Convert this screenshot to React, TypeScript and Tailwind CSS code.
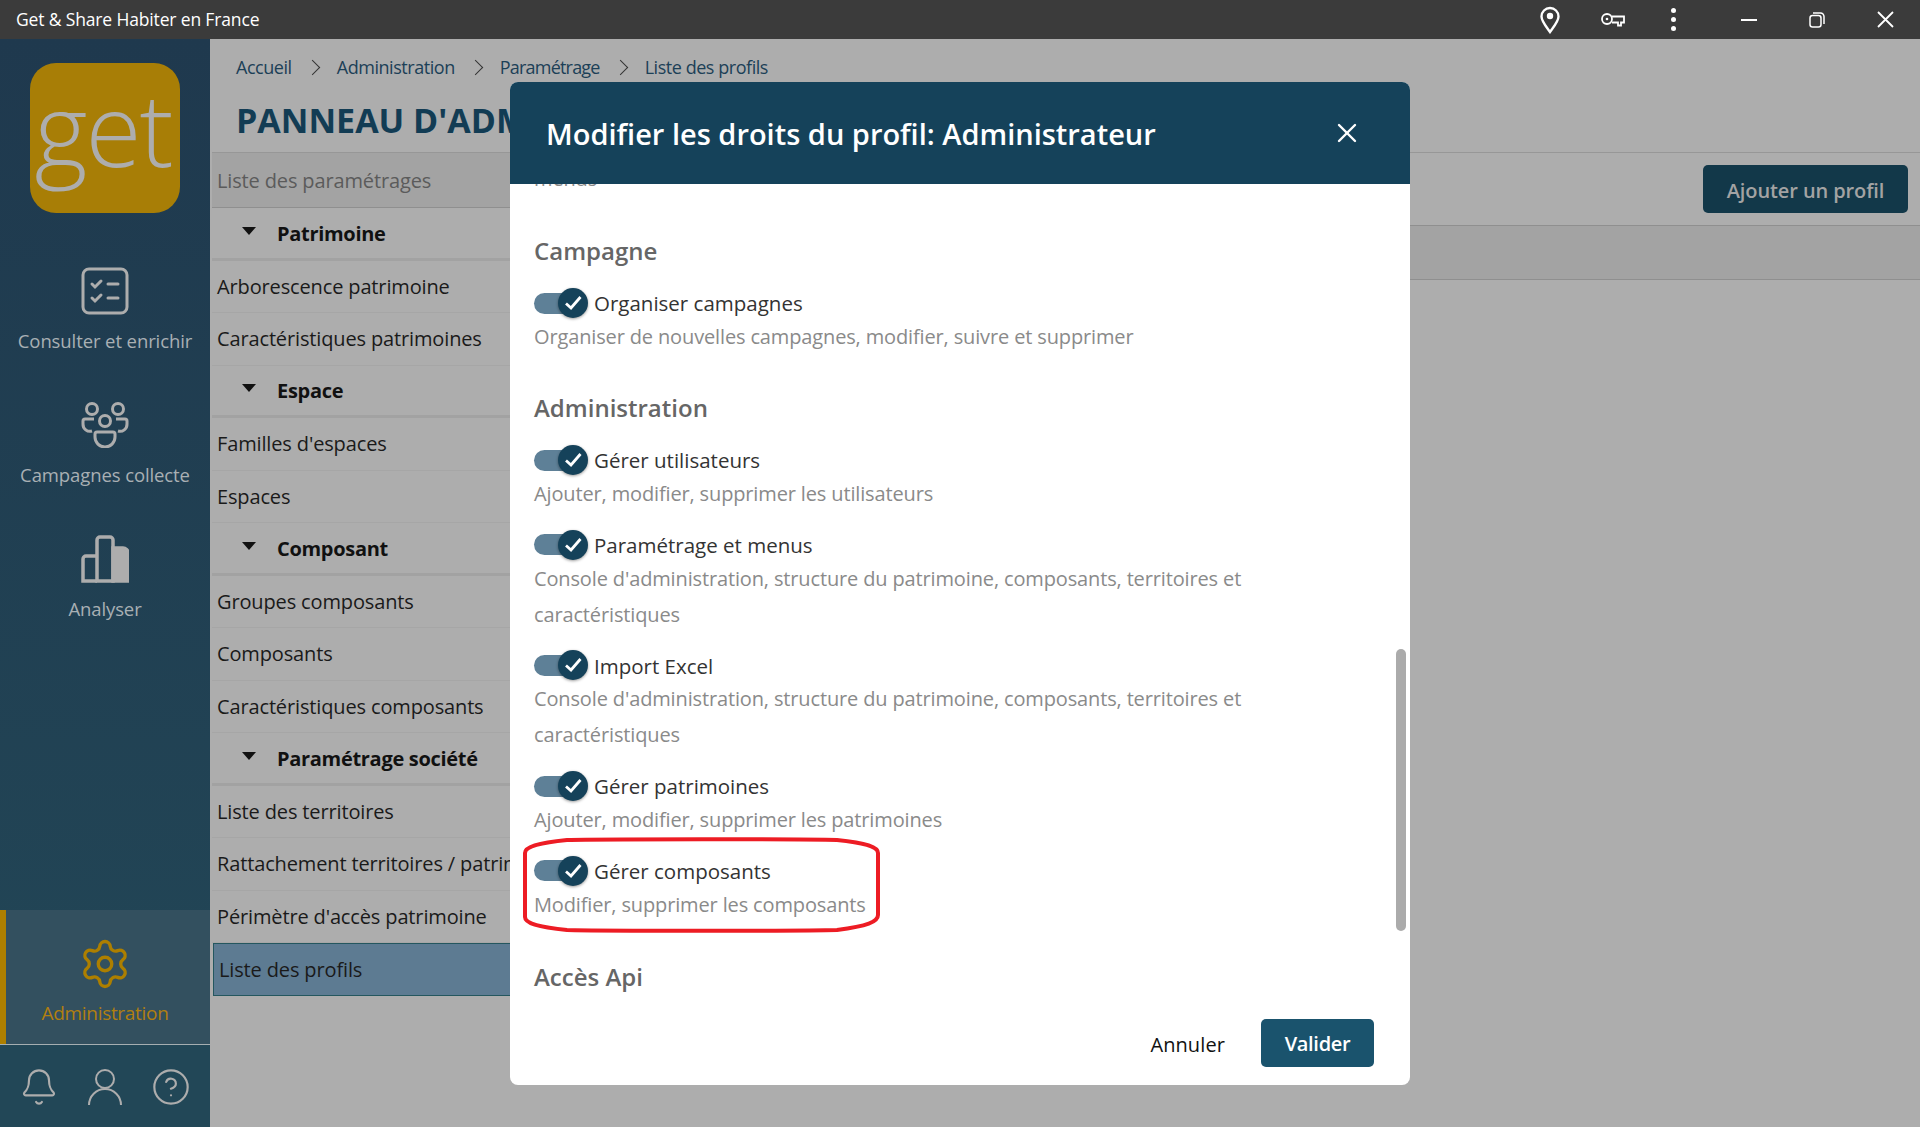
import { Bell, CircleHelp, Settings, X } from "lucide-react";

const listRows = [
  { label: "Patrimoine", section: true },
  { label: "Arborescence patrimoine" },
  { label: "Caractéristiques patrimoines" },
  { label: "Espace", section: true },
  { label: "Familles d'espaces" },
  { label: "Espaces" },
  { label: "Composant", section: true },
  { label: "Groupes composants" },
  { label: "Composants" },
  { label: "Caractéristiques composants" },
  { label: "Paramétrage société", section: true },
  { label: "Liste des territoires" },
  { label: "Rattachement territoires / patrimoine" },
  { label: "Périmètre d'accès patrimoine" },
  { label: "Liste des profils", active: true },
];

function NavItem({ icon, label }: { icon: React.ReactNode; label: string }) {
  return (
    <div className="flex flex-col items-center text-[#a9b0b4]">
      <div className="flex h-[48px] items-center justify-center">{icon}</div>
      <div className="mt-[13px] text-[18.5px] leading-[26px] tracking-[-0.1px]">{label}</div>
    </div>
  );
}

function Toggle({ label }: { label: string }) {
  return (
    <div className="flex h-[30px] items-center">
      <div className="flex h-[21px] w-[46px] items-center justify-end rounded-full bg-[#5e8097]">
        <div className="-mr-[8px] flex h-[30px] w-[30px] shrink-0 items-center justify-center rounded-full bg-[#15425a] shadow-[0_1px_3px_rgba(0,0,0,0.4)]">
          <svg width="22" height="22" viewBox="0 0 22 22" fill="none" stroke="#fff" strokeWidth="2.800">
            <path d="M4 11.500 9 16 18.500 5" />
          </svg>
        </div>
      </div>
      <span className="ml-[14px] pt-[1px] text-[20.5px] text-[#333]">{label}</span>
    </div>
  );
}

function Right({ label, desc }: { label: string; desc: string }) {
  return (
    <div>
      <Toggle label={label} />
      <p className="max-w-[720px] pt-[1px] text-[20px] leading-[36px] tracking-[-0.14px] text-[#8a8a8a]">{desc}</p>
    </div>
  );
}

function Heading({ children }: { children: React.ReactNode }) {
  return <h3 className="text-[24px] leading-[36px] font-semibold text-[#666]">{children}</h3>;
}

function Chevron() {
  return <span className="h-[11px] w-[11px] -translate-x-[2px] rotate-45 border-t-[1.500px] border-r-[1.500px] border-[#333]" />;
}

export default function App() {
  return (
    <div className="flex h-[1127px] w-[1920px] flex-col overflow-hidden bg-[#adadad] font-['Open_Sans',sans-serif]">
      {/* Title bar */}
      <div className="flex h-[39px] shrink-0 items-center bg-[#3b3b3b] pl-[16px] text-white">
        <span className="text-[17.5px] tracking-[-0.15px]">Get &amp; Share Habiter en France</span>
        <div className="ml-auto flex items-center">
          <svg width="22" height="28" viewBox="0 0 22 28" fill="none" stroke="#fff" strokeWidth="2.400" className="mr-[40px]">
            <path d="M11 26C6 19 2.500 15 2.500 10.500a8.500 8.500 0 0 1 17 0C19.500 15 16 19 11 26Z" />
            <circle cx="11" cy="10" r="3.200" fill="#fff" stroke="none" />
          </svg>
          <svg width="24" height="14" viewBox="0 0 24 14" fill="none" stroke="#fff" strokeWidth="1.800" className="mr-[46px]">
            <circle cx="6" cy="6" r="5" />
            <circle cx="6" cy="6" r="1.300" fill="#fff" stroke="none" />
            <path d="M11 3.500h12v6h-3v3h-3v-3h-6" />
          </svg>
          <div className="mr-[65px] flex flex-col gap-[4px]">
            <div className="h-[5px] w-[5px] rounded-full bg-white" />
            <div className="h-[5px] w-[5px] rounded-full bg-white" />
            <div className="h-[5px] w-[5px] rounded-full bg-white" />
          </div>
          <div className="mr-[52px] h-[2px] w-[16px] bg-white" />
          <svg width="16" height="16" viewBox="0 0 16 16" fill="none" stroke="#fff" strokeWidth="1.500" className="mr-[52px]">
            <rect x="1" y="3.500" width="11" height="11.500" rx="2.500" />
            <path d="M4 1h7.500A3.500 3.500 0 0 1 15 4.500V12" />
          </svg>
          <svg width="17" height="17" viewBox="0 0 17 17" fill="none" stroke="#fff" strokeWidth="1.800" className="mr-[26px]">
            <path d="M1 1 16 16M16 1 1 16" />
          </svg>
        </div>
      </div>

      <div className="relative flex min-h-0 flex-1">
        {/* Sidebar */}
        <aside className="flex w-[210px] shrink-0 flex-col bg-gradient-to-b from-[#1f394e] to-[#224757]">
          <div className="mt-[24px] ml-[30px] flex h-[150px] w-[150px] items-center justify-center rounded-[26px] bg-[#a87e06] pr-[4px] pb-[20px]">
            <span className="text-[102px] leading-none font-[350] tracking-[-2px] text-[#adadad]">get</span>
          </div>
          <div className="mt-[54px] flex flex-col gap-[47px]">
            <NavItem
              label="Consulter et enrichir"
              icon={
                <svg width="48" height="48" viewBox="0 0 48 48" fill="none" stroke="#adadad" strokeWidth="3" strokeLinecap="round">
                  <rect x="2" y="2" width="44" height="44" rx="6" />
                  <path d="M11 17l3 3 6-6M11 31l3 3 6-6M27 17h10M27 31h10" />
                </svg>
              }
            />
            <NavItem
              label="Campagnes collecte"
              icon={
                <svg width="48" height="46" viewBox="0 0 48 46" fill="none" stroke="#adadad" strokeWidth="3">
                  <circle cx="11" cy="7" r="5.500" />
                  <circle cx="37" cy="7" r="5.500" />
                  <circle cx="24" cy="19" r="5.500" />
                  <path d="M13 17H4a2 2 0 0 0-2 2v3a7 7 0 0 0 9 7M35 17h9a2 2 0 0 1 2 2v3a7 7 0 0 1-9 7" />
                  <path d="M16 30h16a2 2 0 0 1 2 2v3a10 10 0 0 1-20 0v-3a2 2 0 0 1 2-2Z" />
                </svg>
              }
            />
            <NavItem
              label="Analyser"
              icon={
                <svg width="48" height="48" viewBox="0 0 48 48" fill="none" stroke="#adadad" strokeWidth="3.500">
                  <path d="M16 46H2V24a3 3 0 0 1 3-3h11" />
                  <path d="M16 46V5a3 3 0 0 1 3-3h10a3 3 0 0 1 3 3v41Z" />
                  <path d="M32 13h10a5 5 0 0 1 5 5v28H32Z" fill="#adadad" />
                </svg>
              }
            />
          </div>

          <div className="mt-auto flex h-[134px] flex-col items-center border-l-[6px] border-[#ad7f00] bg-[#33505f] pt-[27px] pr-[6px] text-[#b17f10]">
            <Settings size={54} strokeWidth={1.500} className="text-[#ad7f00]" />
            <span className="mt-[8px] text-[19px] tracking-[-0.3px]">Administration</span>
          </div>
          <div className="flex h-[83px] items-center justify-between border-t border-[#a5aeb1] bg-[#224757] px-[19px] pt-[2px] text-[#adadad]">
            <Bell size={40} strokeWidth={1.300} />
            <svg width="36" height="38" viewBox="0 0 36 38" fill="none" stroke="#adadad" strokeWidth="2">
              <circle cx="18" cy="11" r="9" />
              <path d="M2 37a16 16 0 0 1 32 0" />
            </svg>
            <CircleHelp size={40} strokeWidth={1.300} />
          </div>
        </aside>

        {/* Page behind the dialog */}
        <main className="ml-[2px] flex min-w-0 flex-1 flex-col">
          <div className="flex h-[55px] items-center gap-[17px] pt-[1px] pl-[24px] text-[18px] tracking-[-0.45px] text-[#1c4057]">
            <span>Accueil</span>
            <Chevron />
            <span>Administration</span>
            <Chevron />
            <span className="tracking-[-0.8px]">Paramétrage</span>
            <Chevron />
            <span>Liste des profils</span>
          </div>
          <h1 className="flex h-[59px] items-center border-b border-[#979797] pb-[5px] pl-[24px] text-[34px] font-bold whitespace-nowrap text-[#123c54]">
            PANNEAU D'ADMINISTRATION
          </h1>
          <div className="flex min-h-0 flex-1">
            <div className="w-[340px] shrink-0">
              <div className="flex h-[55px] items-center border-b border-[#8f8f8f] bg-[#a3a3a3] pt-[2px] pl-[5px] text-[20px] tracking-[-0.14px] text-[#5b5b5b]">
                Liste des paramétrages
              </div>
              {listRows.map((row) =>
                row.section ? (
                  <div key={row.label} className="flex h-[52.500px] items-center border-b-[3px] border-[#a2a2a2] pt-[2px] pl-[30px] text-[20px] font-bold tracking-[-0.3px] whitespace-nowrap text-[#111]">
                    <span className="mr-[21px] mb-[6px] h-0 w-0 border-x-[7px] border-t-[8px] border-x-transparent border-t-[#111]" />
                    {row.label}
                  </div>
                ) : (
                  <div
                    key={row.label}
                    className={`flex h-[52.500px] items-center pt-[1px] pl-[5px] text-[20px] tracking-[-0.14px] whitespace-nowrap text-[#1a1a1a] ${
                      row.active ? "ml-[1px] border border-[#24575f] bg-[#5d7b92] pl-[2px]" : "border-b border-[#a6a6a6]"
                    }`}
                  >
                    {row.label}
                  </div>
                )
              )}
            </div>
            <div className="min-w-0 flex-1">
              <div className="flex h-[73px] items-center justify-end border-b border-[#8f8f8f] pr-[12px]">
                <button className="h-[48px] w-[205px] rounded-[5px] bg-[#123849] pt-[3px] text-[20px] font-semibold tracking-[-0.1px] text-[#a3a3a3]">
                  Ajouter un profil
                </button>
              </div>
              <div className="h-[54px] border-b border-[#8f8f8f] bg-[#a3a3a3]" />
            </div>
          </div>
        </main>

        {/* Dialog */}
        <div className="absolute top-[43px] left-[510px] flex h-[1003px] w-[900px] flex-col overflow-hidden rounded-[8px] bg-white">
          <div className="relative z-10 flex h-[102px] shrink-0 items-center justify-between bg-[#15425a] pr-[47px] pl-[36px] text-white">
            <h2 className="pt-[2px] text-[29px] font-semibold">Modifier les droits du profil: Administrateur</h2>
            <X size={32} strokeWidth={1.800} />
          </div>
          <div className="min-h-0 flex-1 overflow-hidden px-[24px]">
            <div className="-mt-[23px]">
              <p className="text-[20px] leading-[36px] tracking-[-0.14px] text-[#8a8a8a]">menus</p>
              <div className="mt-[36px]">
                <Heading>Campagne</Heading>
                <div className="mt-[19px]">
                  <Right label="Organiser campagnes" desc="Organiser de nouvelles campagnes, modifier, suivre et supprimer" />
                </div>
              </div>
              <div className="mt-[35px]">
                <Heading>Administration</Heading>
                <div className="mt-[19px] flex flex-col gap-[17.700px]">
                  <Right label="Gérer utilisateurs" desc="Ajouter, modifier, supprimer les utilisateurs" />
                  <Right
                    label="Paramétrage et menus"
                    desc="Console d'administration, structure du patrimoine, composants, territoires et caractéristiques"
                  />
                  <Right
                    label="Import Excel"
                    desc="Console d'administration, structure du patrimoine, composants, territoires et caractéristiques"
                  />
                  <Right label="Gérer patrimoines" desc="Ajouter, modifier, supprimer les patrimoines" />
                  <Right label="Gérer composants" desc="Modifier, supprimer les composants" />
                </div>
              </div>
              <div className="mt-[36px]">
                <Heading>Accès Api</Heading>
              </div>
            </div>
          </div>
          <div className="flex h-[84px] shrink-0 items-start justify-end gap-[36px] pt-[18px] pr-[36px]">
            <button className="h-[48px] pt-[3px] text-[20px] tracking-[0.1px] text-[#111]">Annuler</button>
            <button className="h-[48px] w-[113px] rounded-[5px] bg-[#1a536d] pt-[2px] text-[20px] font-semibold tracking-[-0.3px] text-white">Valider</button>
          </div>
          {/* scrollbar */}
          <div className="absolute top-[567px] right-[4px] h-[282px] w-[10px] rounded-full bg-[#ababab]" />
          {/* hand-drawn highlight */}
          <svg className="absolute top-[755px] left-[12px]" width="360" height="96" viewBox="0 0 360 96" fill="none" stroke="#ed1c24" strokeWidth="4">
            <path d="M45 3C80 2 280 2 315 3 345 6 356 10 356 16V78C356 85 345 89 315 93 280 94 80 94 45 93 15 90 3 86 3 80V16C3 10 15 6 45 3Z" />
          </svg>
        </div>
      </div>
    </div>
  );
}
